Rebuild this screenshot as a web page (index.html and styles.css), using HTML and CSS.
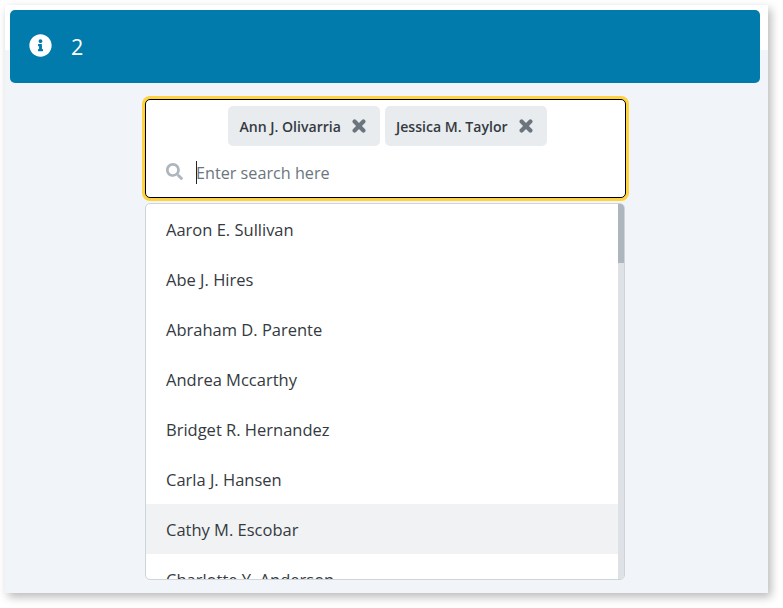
FILE: index.html
```html
<!DOCTYPE html>
<html lang="en">
<head>
    <meta charset="UTF-8" />
    <title>Search picker</title>
    <link rel="stylesheet" href="styles.css">
</head>
<body>

    <div class="frame">
        <div class="alert">
            <svg class="alert-icon" viewBox="0 0 512 512"><path d="M256 8C119.043 8 8 119.083 8 256c0 136.997 111.043 248 248 248s248-111.003 248-248C504 119.083 392.957 8 256 8zm0 110c23.196 0 42 18.804 42 42s-18.804 42-42 42-42-18.804-42-42 18.804-42 42-42zm56 254c0 6.627-5.373 12-12 12h-88c-6.627 0-12-5.373-12-12v-24c0-6.627 5.373-12 12-12h12v-64h-12c-6.627 0-12-5.373-12-12v-24c0-6.627 5.373-12 12-12h64c6.627 0 12 5.373 12 12v100h12c6.627 0 12 5.373 12 12v24z"/></svg>
            <span class="alert-count">2</span>
        </div>

        <div class="picker">
            <div class="search-box">
                <div class="chips">
                    <span class="chip">Ann J. Olivarria
                        <svg class="chip-x" viewBox="0 0 14 14"><path d="M2.6 2.6L11.4 11.4M11.4 2.6L2.6 11.4"/></svg>
                    </span>
                    <span class="chip">Jessica M. Taylor
                        <svg class="chip-x" viewBox="0 0 14 14"><path d="M2.6 2.6L11.4 11.4M11.4 2.6L2.6 11.4"/></svg>
                    </span>
                </div>
                <div class="search-row">
                    <svg class="search-icon" viewBox="0 0 512 512"><path d="M505 442.7L405.3 343c-4.5-4.5-10.6-7-17-7H372c27.6-35.3 44-79.7 44-128C416 93.1 322.9 0 208 0S0 93.1 0 208s93.1 208 208 208c48.3 0 92.7-16.4 128-44v16.3c0 6.4 2.5 12.5 7 17l99.7 99.7c9.4 9.4 24.6 9.4 33.9 0l28.3-28.3c9.4-9.4 9.4-24.6.1-34zM208 336c-70.7 0-128-57.2-128-128 0-70.7 57.2-128 128-128 70.7 0 128 57.2 128 128 0 70.7-57.2 128-128 128z"/></svg>
                    <span class="caret"></span>
                    <span class="placeholder">Enter search here</span>
                </div>
            </div>

            <div class="results">
                <ul class="result-list">
                    <li>Aaron E. Sullivan</li>
                    <li>Abe J. Hires</li>
                    <li>Abraham D. Parente</li>
                    <li>Andrea Mccarthy</li>
                    <li>Bridget R. Hernandez</li>
                    <li>Carla J. Hansen</li>
                    <li class="hover">Cathy M. Escobar</li>
                    <li>Charlotte Y. Anderson</li>
                </ul>
                <div class="scroll-track"><div class="scroll-thumb"></div></div>
            </div>
        </div>
    </div>

</body>
</html>
```

FILE: styles.css
```css
html, body {
    margin: 0;
    height: 100%;
    background-color: white;
    overflow: hidden;
}

body {
    padding: 5px 15px 15px 5px;
    box-sizing: border-box;
    font-family: "Open Sans", "Liberation Sans", sans-serif;
    color: #343a40;
}

.frame {
    height: 588px;
    padding: 5px 8px 0 5px;
    box-sizing: border-box;
    background: linear-gradient(to bottom, white 45px, #f1f5f9 45px);
    box-shadow: 3px 4px 9px rgba(0, 0, 0, 0.28);
}

.alert {
    display: flex;
    align-items: center;
    height: 73px;
    padding: 0 20px 0 19px;
    box-sizing: border-box;
    background-color: #007bac;
    border-radius: 5px;
    color: white;
}

.alert-icon {
    width: 23px;
    height: 23px;
    margin-top: -3px;
    fill: white;
}

.alert-count {
    margin-left: 19px;
    font-size: 21.5px;
}

.picker {
    width: 481px;
    margin: 16px 0 0 135px;
}

.search-box {
    height: 99px;
    padding: 6px 16px 0 20px;
    box-sizing: border-box;
    background-color: white;
    border: 1px solid black;
    border-radius: 5px;
    box-shadow: 0 0 0 3px #ffd23f;
}

.chips {
    display: flex;
    justify-content: center;
    gap: 5px;
}

.chip {
    display: flex;
    align-items: center;
    justify-content: space-between;
    height: 40px;
    padding: 0 14px 0 11px;
    background-color: #e9ecef;
    border-radius: 5px;
    font-size: 14.1px;
    font-weight: 600;
    white-space: nowrap;
}

.chip-x {
    width: 14px;
    height: 14px;
    margin-left: 11px;
    fill: none;
    stroke: #6c757d;
    stroke-width: 4.2;
    stroke-linecap: round;
}

.search-row {
    display: flex;
    align-items: center;
    height: 24px;
    margin-top: 15px;
}

.search-icon {
    width: 17px;
    height: 17px;
    margin-top: -4px;
    fill: #adb5bd;
}

.caret {
    width: 1px;
    height: 23px;
    margin-left: 13px;
    margin-top: -1px;
    background-color: #212529;
}

.placeholder {
    margin-left: -1px;
    font-size: 16.2px;
    color: #6c757d;
}

.results {
    display: flex;
    width: 480px;
    height: 377px;
    margin-top: 5px;
    box-sizing: border-box;
    background-color: white;
    border: 1px solid #ced4da;
    border-radius: 5px;
    overflow: hidden;
}

.result-list {
    flex: 1;
    margin: 0;
    padding: 0;
    list-style: none;
    overflow: hidden;
}

.result-list li {
    height: 50px;
    padding: 0 20px;
    line-height: 52px;
    font-size: 16.5px;
}

.result-list li.hover {
    background-color: #f1f2f4;
}

.scroll-track {
    width: 6px;
    background-color: #dee2e6;
}

.scroll-thumb {
    height: 59px;
    background-color: #adb5bd;
}
```
